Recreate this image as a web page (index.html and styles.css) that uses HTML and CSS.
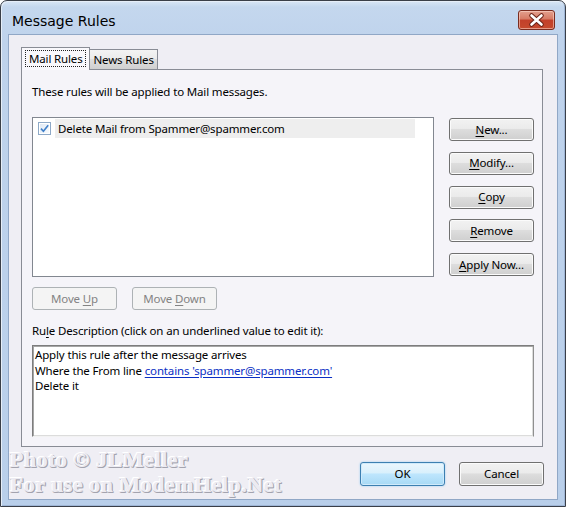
FILE: index.html
```html
<!DOCTYPE html>
<html lang="en">
<head>
<meta charset="utf-8">
<title>Message Rules</title>
<link rel="stylesheet" href="styles.css">
</head>
<body>
<div class="window">
  <div class="titlebar">
    <span class="title">Message Rules</span>
    <div class="close" aria-label="Close">
      <svg width="37" height="20" viewBox="0 0 37 20">
        <path d="M13.5 5.5 L23.5 14.5 M23.5 5.5 L13.5 14.5" stroke="#6b2317" stroke-width="4.6" stroke-linecap="round"/>
        <path d="M13.5 5.5 L23.5 14.5 M23.5 5.5 L13.5 14.5" stroke="#ffffff" stroke-width="2.6" stroke-linecap="round"/>
      </svg>
    </div>
  </div>
  <div class="client">
    <div class="tabs">
      <div class="tab active"><span class="focus">Mail Rules</span></div>
      <div class="tab">News Rules</div>
    </div>
    <div class="panel">
      <p class="intro">These rules will be applied to Mail messages.</p>
      <div class="rules-row">
        <div class="listbox">
          <div class="item">
            <svg class="check" width="13" height="13" viewBox="0 0 13 13">
              <defs>
                <linearGradient id="cbg" x1="0" y1="0" x2="1" y2="1">
                  <stop offset="0" stop-color="#dfe9f5"/>
                  <stop offset="1" stop-color="#f8fbfe"/>
                </linearGradient>
              </defs>
              <rect x="0.5" y="0.5" width="12" height="12" fill="#fff" stroke="#8ea9c7"/>
              <rect x="2" y="2" width="9" height="9" fill="url(#cbg)"/>
              <path d="M3 6.6 L5.4 9.2 L10.2 3.2" fill="none" stroke="#3f7fc9" stroke-width="1.6"/>
            </svg>
            <span class="item-label">Delete Mail from Spammer@spammer.com</span>
          </div>
        </div>
        <div class="side-buttons">
          <button class="btn"><u>N</u>ew...</button>
          <button class="btn"><u>M</u>odify...</button>
          <button class="btn"><u>C</u>opy</button>
          <button class="btn"><u>R</u>emove</button>
          <button class="btn"><u>A</u>pply Now...</button>
        </div>
      </div>
      <div class="move-row">
        <button class="btn" disabled>Move <u>U</u>p</button>
        <button class="btn" disabled>Move <u>D</u>own</button>
      </div>
      <p class="desc-label">Ru<u>l</u>e Description (click on an underlined value to edit it):</p>
      <div class="desc-box">
        <div>Apply this rule after the message arrives</div>
        <div>Where the From line <a href="#" class="val">contains 'spammer@spammer.com'</a></div>
        <div>Delete it</div>
      </div>
    </div>
    <div class="footer">
      <button class="btn default">OK</button>
      <button class="btn">Cancel</button>
    </div>
  </div>
  <div class="watermark">
    <div>Photo © JLMeller</div>
    <div>For use on ModemHelp.Net</div>
  </div>
</div>
</body>
</html>
```

FILE: styles.css
```css
* { box-sizing: border-box; }

html, body {
  margin: 0;
  padding: 0;
}

body {
  width: 566px;
  height: 507px;
  overflow: hidden;
  background: #ffffff;
  font-family: "Noto Sans", "Open Sans", sans-serif;
  font-size: 11.5px;
  letter-spacing: -0.15px;
  color: #000;
}

.window {
  position: relative;
  width: 566px;
  height: 507px;
  border: 1px solid #3a3f48;
  border-radius: 7px 7px 0 0;
  background: linear-gradient(#d9e6f5 0px, #c4d7ee 6px, #bfd3ec 40px, #b9cfea 100%);
  box-shadow: inset 1px 1px 0 #e6eef8, inset -1px -1px 0 #9fb6d6;
  padding: 0 7px 6px 7px;
  display: flex;
  flex-direction: column;
}

.titlebar {
  height: 33px;
  flex: none;
  display: flex;
  justify-content: space-between;
  align-items: flex-start;
  padding-left: 4px;
}

.title {
  margin-top: 11px;
  font-family: "DejaVu Sans", sans-serif;
  font-size: 14px;
  letter-spacing: 0;
  line-height: 18px;
  color: #000;
}

.close {
  margin-top: 9px;
  margin-right: 3px;
  width: 37px;
  height: 20px;
  border: 1px solid #7a2c1f;
  border-radius: 3px;
  background: linear-gradient(#e3a08e 0%, #d67a64 45%, #c2402a 50%, #c64a2e 100%);
  box-shadow: inset 0 0 0 1px rgba(255, 220, 210, 0.55);
  position: relative;
}

.close svg {
  position: absolute;
  left: -1px;
  top: -1px;
}

.client {
  flex: 1;
  background: #efeef4;
  border: 1px solid #90a7c6;
  padding: 12px 14px 0 12px;
  display: flex;
  flex-direction: column;
}

.tabs {
  display: flex;
  align-items: flex-end;
  height: 23px;
  margin-bottom: -1px;
  position: relative;
  z-index: 1;
}

.tab {
  height: 20px;
  margin-bottom: 1px;
  padding: 0 3px 0 4px;
  border: 1px solid #898c95;
  border-bottom: none;
  border-left: none;
  background: linear-gradient(#f3f3f3 0%, #ebebeb 45%, #dedede 50%, #d0d0d0 100%);
  line-height: 19px;
  white-space: nowrap;
}

.tab.active {
  height: 23px;
  margin-bottom: 0;
  border-left: 1px solid #898c95;
  padding: 2px 3px 0 3px;
  background: #f9f8fc;
}

.focus {
  display: block;
  border: 1px dotted #222;
  padding: 0 2px 0 3px;
  line-height: 15px;
}

.panel {
  border: 1px solid #898c95;
  background: #f5f4f9;
  padding: 14px 8px 9px 10px;
}

.intro {
  margin: 0 0 17px 0;
  line-height: 16px;
}

.rules-row {
  display: flex;
  gap: 15px;
}

.listbox {
  width: 402px;
  height: 160px;
  border: 1px solid #828790;
  background: #ffffff;
  padding: 1px 0 0 5px;
}

.item {
  display: flex;
  align-items: center;
  height: 19px;
  gap: 4px;
}

.check {
  flex: none;
  margin-top: -1px;
}

.item-label {
  width: 360px;
  height: 19px;
  line-height: 19px;
  padding-left: 3px;
  background: #eeeeee;
}

.side-buttons {
  display: flex;
  flex-direction: column;
  gap: 10.75px;
  padding-top: 1px;
}

.btn {
  width: 85px;
  height: 23px;
  padding: 0;
  border: 1px solid #707070;
  border-radius: 3px;
  background: linear-gradient(#f2f2f2 0%, #ebebeb 45%, #dddddd 50%, #cfcfcf 100%);
  box-shadow: inset 0 0 0 1px #fbfbfb;
  font-family: inherit;
  font-size: 11.5px;
  letter-spacing: -0.15px;
  color: #000;
  line-height: 20px;
}

.btn u {
  text-decoration: underline;
  text-underline-offset: 2px;
}

.btn:disabled {
  border-color: #adb2b5;
  background: #f4f4f4;
  box-shadow: none;
  color: #838383;
}

.move-row {
  display: flex;
  gap: 15px;
  margin-top: 10px;
}

.desc-label {
  margin: 13px 0 6px 0;
  line-height: 16px;
}

.desc-label u {
  text-underline-offset: 2px;
}

.desc-box {
  width: 502px;
  height: 92px;
  background: #ffffff;
  border: 1px solid;
  border-color: #7d7d7d #8f8f8f #f2f2f2 #7d7d7d;
  box-shadow: inset 1px 1px 0 #a6a6a6, inset -1px -1px 0 #dcdcdc;
  padding: 1px 2px;
  line-height: 15.5px;
}

.val {
  color: #0a2fc4;
  text-decoration: underline;
  text-underline-offset: 2px;
}

.footer {
  display: flex;
  justify-content: flex-end;
  gap: 14px;
  margin-top: 15px;
  margin-right: -1px;
}

.footer .btn {
  height: 24px;
}

.btn.default {
  border-color: #3c7fb1;
  background: linear-gradient(#eaf6fd 0%, #d9f0fc 45%, #bee6fd 50%, #a7d9f5 100%);
  box-shadow: inset 0 0 0 1px #cfeafb, 0 0 2px #8fc8ef;
}

.watermark {
  position: absolute;
  left: 9px;
  top: 446px;
  font-family: "Liberation Serif", serif;
  font-weight: bold;
  font-size: 22px;
  line-height: 25px;
  color: #ecebf2;
  text-shadow: -1px -1px 0 #ffffff, 1px 1px 0 #a3a3ae, 1px 0 0 #b8b8c2, 0 1px 0 #b8b8c2;
  letter-spacing: 0.5px;
  pointer-events: none;
}
```
